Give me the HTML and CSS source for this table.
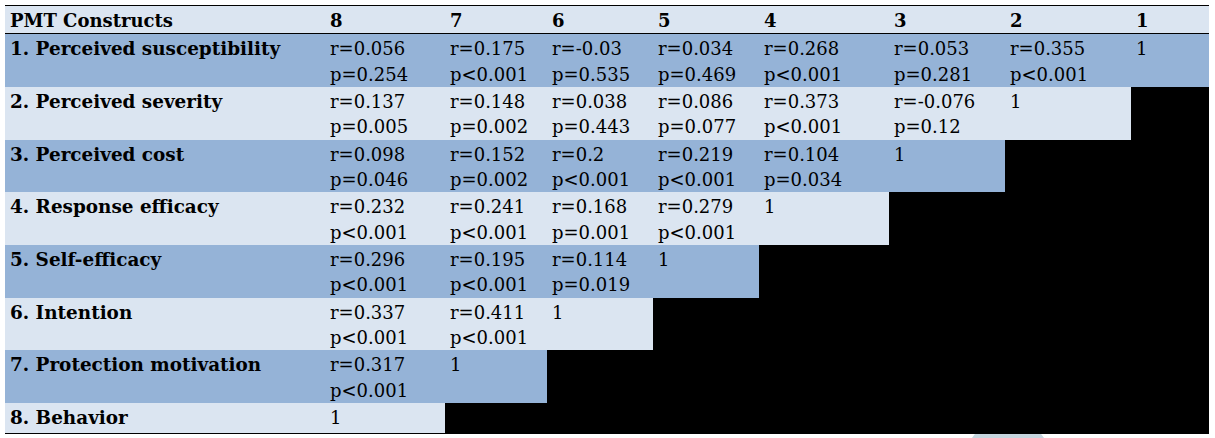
FILE: index.html
```html
<!DOCTYPE html>
<html lang="en">
<head>
<meta charset="utf-8">
<title>PMT Constructs correlation table</title>
<link rel="stylesheet" href="styles.css">
</head>
<body>
<table class="corr">
  <colgroup>
    <col class="c-label"><col class="c8"><col class="c7"><col class="c6"><col class="c5"><col class="c4"><col class="c3"><col class="c2"><col class="c1">
  </colgroup>
  <thead>
    <tr class="head">
      <th>PMT Constructs</th><th>8</th><th>7</th><th>6</th><th>5</th><th>4</th><th>3</th><th>2</th><th>1</th>
    </tr>
  </thead>
  <tbody>
    <tr class="dark">
      <th>1. Perceived susceptibility</th>
      <td>r=0.056<br>p=0.254</td><td>r=0.175<br>p&lt;0.001</td><td>r=-0.03<br>p=0.535</td><td>r=0.034<br>p=0.469</td><td>r=0.268<br>p&lt;0.001</td><td>r=0.053<br>p=0.281</td><td>r=0.355<br>p&lt;0.001</td><td>1</td>
    </tr>
    <tr class="light">
      <th>2. Perceived severity</th>
      <td>r=0.137<br>p=0.005</td><td>r=0.148<br>p=0.002</td><td>r=0.038<br>p=0.443</td><td>r=0.086<br>p=0.077</td><td>r=0.373<br>p&lt;0.001</td><td>r=-0.076<br>p=0.12</td><td>1</td><td class="void"></td>
    </tr>
    <tr class="dark">
      <th>3. Perceived cost</th>
      <td>r=0.098<br>p=0.046</td><td>r=0.152<br>p=0.002</td><td>r=0.2<br>p&lt;0.001</td><td>r=0.219<br>p&lt;0.001</td><td>r=0.104<br>p=0.034</td><td>1</td><td class="void"></td><td class="void"></td>
    </tr>
    <tr class="light">
      <th>4. Response efficacy</th>
      <td>r=0.232<br>p&lt;0.001</td><td>r=0.241<br>p&lt;0.001</td><td>r=0.168<br>p=0.001</td><td>r=0.279<br>p&lt;0.001</td><td>1</td><td class="void"></td><td class="void"></td><td class="void"></td>
    </tr>
    <tr class="dark">
      <th>5. Self-efficacy</th>
      <td>r=0.296<br>p&lt;0.001</td><td>r=0.195<br>p&lt;0.001</td><td>r=0.114<br>p=0.019</td><td>1</td><td class="void"></td><td class="void"></td><td class="void"></td><td class="void"></td>
    </tr>
    <tr class="light">
      <th>6. Intention</th>
      <td>r=0.337<br>p&lt;0.001</td><td>r=0.411<br>p&lt;0.001</td><td>1</td><td class="void"></td><td class="void"></td><td class="void"></td><td class="void"></td><td class="void"></td>
    </tr>
    <tr class="dark">
      <th>7. Protection motivation</th>
      <td>r=0.317<br>p&lt;0.001</td><td>1</td><td class="void"></td><td class="void"></td><td class="void"></td><td class="void"></td><td class="void"></td><td class="void"></td>
    </tr>
    <tr class="light last">
      <th>8. Behavior</th>
      <td>1</td><td class="void"></td><td class="void"></td><td class="void"></td><td class="void"></td><td class="void"></td><td class="void"></td><td class="void"></td>
    </tr>
  </tbody>
</table>
<div class="mark"></div>
</body>
</html>
```

FILE: styles.css
```css
html, body {
  margin: 0;
  padding: 0;
  background: #ffffff;
}

body {
  position: relative;
  width: 1215px;
  height: 438px;
  overflow: hidden;
  font-family: "DejaVu Serif", "Liberation Serif", serif;
  font-size: 18px;
  color: #000;
}

.corr {
  margin: 5px 0 0 5px;
  width: 1204px;
  border-collapse: collapse;
  table-layout: fixed;
  border-top: 1px solid #000;
  border-bottom: 1px solid #000;
}

.c-label { width: 320px; }
.c8 { width: 120px; }
.c7 { width: 102px; }
.c6 { width: 106px; }
.c5 { width: 106px; }
.c4 { width: 130px; }
.c3 { width: 116px; }
.c2 { width: 126px; }
.c1 { width: 78px; }

.corr th,
.corr td {
  padding: 2px 5px 0;
  line-height: 25.35px;
  text-align: left;
  vertical-align: top;
  white-space: nowrap;
}

.corr th {
  font-weight: bold;
}

.corr tbody th {
  font-size: 18.4px;
}

.corr td {
  font-weight: normal;
}

.head th {
  background: #dbe5f1;
  border-bottom: 1px solid #000;
}

.dark th, .dark td { background: #95b3d7; }
.light th, .light td { background: #dbe5f1; }

.last th, .last td { padding-bottom: 2px; }

.corr td.void { background: #000; }

.mark {
  position: absolute;
  left: 972px;
  top: 434px;
  width: 72px;
  height: 4px;
  background: #c6d6df;
  clip-path: polygon(4% 0, 96% 0, 100% 100%, 0 100%);
}
```
